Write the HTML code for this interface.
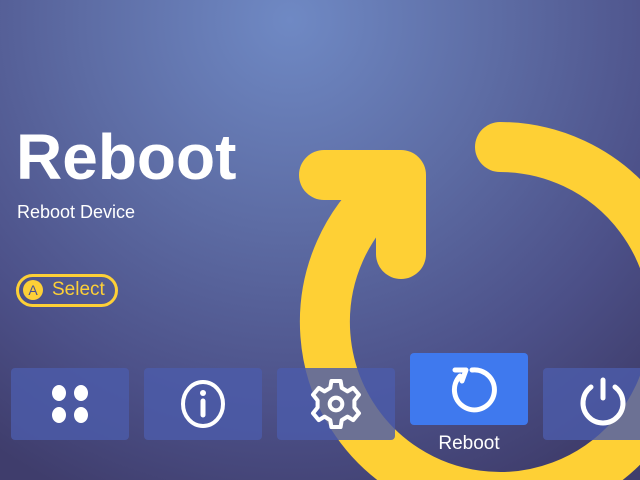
<!DOCTYPE html>
<html><head><style>
body{margin:0;width:640px;height:480px;overflow:hidden;position:relative;font-family:"Liberation Sans",sans-serif;
background:radial-gradient(ellipse 520px 520px at 290px 20px,#6f89c4 0%,#5d6ca4 40%,#4c5088 75%,#3f3d6c 100%);}
.t{position:absolute;left:16px;top:120px;color:#fff;font-size:64px;font-weight:bold;letter-spacing:0px}
.s{position:absolute;left:17px;top:202px;color:#fff;font-size:18px}
.sel{position:absolute;left:16px;top:274px;width:96px;height:27px;border:3px solid #fdd037;border-radius:17px;box-sizing:content-box;color:#fdd037;font-size:19px}
.sel .a{position:absolute;left:4px;top:3px;width:20px;height:20px;border-radius:50%;background:#fdd037;color:#4b5290;font-size:14px;text-align:center;line-height:20px}
.sel span.x{position:absolute;left:33px;top:2px}
.b{position:absolute;width:118px;height:72px;border-radius:4px;background:rgba(76,92,170,0.82)}
.b svg{position:absolute;left:0;top:0}
.lbl{position:absolute;left:410px;top:433px;width:118px;text-align:center;color:#fff;font-size:19px}
</style></head><body>
<svg width="640" height="480" style="position:absolute;left:0;top:0">
<path d="M500,147 A175,175 0 1 1 385,190" fill="none" stroke="#fed035" stroke-width="50" stroke-linecap="round"/>
<path d="M324,175 L401,175 L401,254" fill="none" stroke="#fed035" stroke-width="50" stroke-linecap="round" stroke-linejoin="round"/>
</svg>
<div class="t">Reboot</div>
<div class="s">Reboot Device</div>
<div class="sel"><div class="a">A</div><span class="x">Select</span></div>
<div class="b" style="left:11px;top:368px"><svg width="118" height="72"><g fill="#fff"><ellipse cx="48" cy="25" rx="7" ry="8"/><ellipse cx="70" cy="25" rx="7" ry="8"/><ellipse cx="48" cy="47" rx="7" ry="8"/><ellipse cx="70" cy="47" rx="7" ry="8"/></g></svg></div>
<div class="b" style="left:144px;top:368px"><svg width="118" height="72"><ellipse cx="59" cy="36" rx="20" ry="22" fill="none" stroke="#fff" stroke-width="4"/><circle cx="59" cy="25" r="3" fill="#fff"/><line x1="59" y1="33" x2="59" y2="47" stroke="#fff" stroke-width="5" stroke-linecap="round"/></svg></div>
<div class="b" style="left:277px;top:368px"><svg width="118" height="72"><g transform="translate(59,36) scale(1.15)" fill="none" stroke="#fff" stroke-width="3.5" stroke-linejoin="round"><path d="M-4,-20 L4,-20 L5,-14 L10,-11 L15,-14 L20,-8 L16,-3 L16,3 L20,8 L15,14 L10,11 L5,14 L4,20 L-4,20 L-5,14 L-10,11 L-15,14 L-20,8 L-16,3 L-16,-3 L-20,-8 L-15,-14 L-10,-11 L-5,-14 Z"/><circle r="5.5"/></g></svg></div>
<div class="b" style="left:410px;top:353px;background:#3f79ee"><svg width="118" height="72"><path d="M50,23 A20,20 0 1 0 62,17" fill="none" stroke="#fff" stroke-width="5" stroke-linecap="round"/><path d="M45,17 L56,17 L52,28" fill="none" stroke="#fff" stroke-width="5" stroke-linecap="round" stroke-linejoin="round"/></svg></div>
<div class="lbl">Reboot</div>
<div class="b" style="left:543px;top:368px"><svg width="118" height="72"><path d="M48,19 A20,20 0 1 0 72,19" fill="none" stroke="#fff" stroke-width="5" stroke-linecap="round"/><line x1="60" y1="12" x2="60" y2="30" stroke="#fff" stroke-width="5" stroke-linecap="round"/></svg></div>
</body></html>
